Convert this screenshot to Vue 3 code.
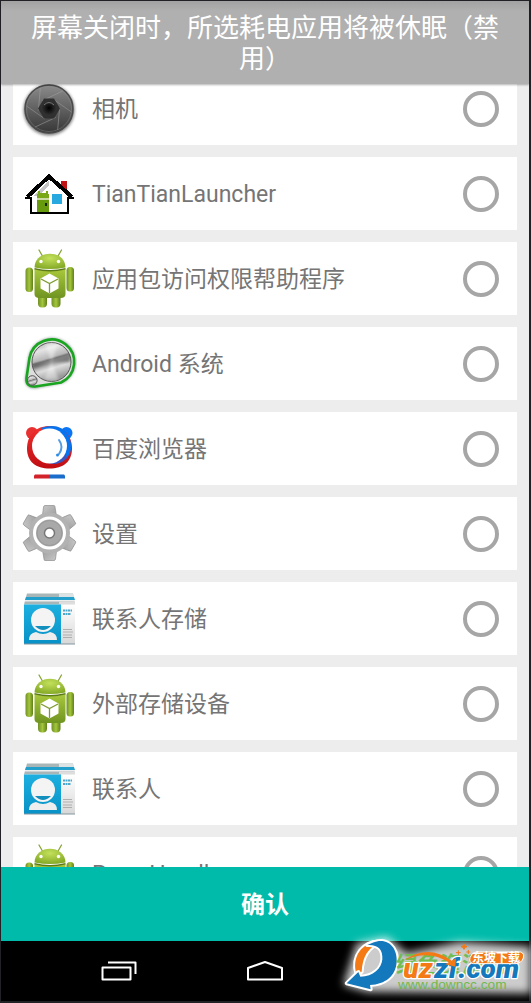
<script setup>
import { ref } from 'vue'

const apps = ref([
  { name: '相机', icon: 'camera', checked: false },
  { name: 'TianTianLauncher', icon: 'house', checked: false },
  { name: '应用包访问权限帮助程序', icon: 'droid', checked: false },
  { name: 'Android 系统', icon: 'system', checked: false },
  { name: '百度浏览器', icon: 'baidu', checked: false },
  { name: '设置', icon: 'gear', checked: false },
  { name: '联系人存储', icon: 'contacts', checked: false },
  { name: '外部存储设备', icon: 'droid', checked: false },
  { name: '联系人', icon: 'contacts', checked: false },
  { name: 'ProxyHandler', icon: 'droid', checked: false }
])
const blades = [0, 60, 120, 180, 240, 300]
</script>

<template>
  <div class="screen">
    <svg class="defs" aria-hidden="true">
      <defs>
        <linearGradient id="lens" x1="0" y1="0" x2="0" y2="1">
          <stop offset="0" stop-color="#8b8b8b" /><stop offset="1" stop-color="#363636" />
        </linearGradient>
        <radialGradient id="glass">
          <stop offset="0" stop-color="#000" /><stop offset="1" stop-color="#333" />
        </radialGradient>
        <linearGradient id="green" x1="0" y1="0" x2="0" y2="1">
          <stop offset="0" stop-color="#a9c83c" /><stop offset="1" stop-color="#6f9420" />
        </linearGradient>
        <radialGradient id="head" cx=".5" cy=".3" r=".7">
          <stop offset="0" stop-color="#c3e05a" /><stop offset="1" stop-color="#85aa27" />
        </radialGradient>
        <linearGradient id="limb">
          <stop offset="0" stop-color="#6f9026" /><stop offset=".5" stop-color="#a4c63c" /><stop offset="1" stop-color="#5f8019" />
        </linearGradient>
        <linearGradient id="steel" x1="0" y1="0" x2="0.3" y2="1">
          <stop offset="0" stop-color="#a0a0a0" /><stop offset=".25" stop-color="#e4e4e4" />
          <stop offset=".48" stop-color="#b8b8b8" /><stop offset=".53" stop-color="#777" />
          <stop offset=".75" stop-color="#ddd" /><stop offset="1" stop-color="#999" />
        </linearGradient>
        <linearGradient id="red" x1="0" y1="0" x2="0" y2="1">
          <stop offset="0" stop-color="#f0302e" /><stop offset="1" stop-color="#c00d12" />
        </linearGradient>
        <linearGradient id="metal" x1="0" y1="0" x2="1" y2="1">
          <stop offset="0" stop-color="#c8c8c8" /><stop offset="1" stop-color="#989898" />
        </linearGradient>
        <linearGradient id="card" x1="0" y1="0" x2="0" y2="1">
          <stop offset="0" stop-color="#1cb0e0" /><stop offset="1" stop-color="#0891c6" />
        </linearGradient>
        <linearGradient id="paper" x1="0" y1="0" x2="0" y2="1">
          <stop offset="0" stop-color="#fff" /><stop offset="1" stop-color="#d8d8d8" />
        </linearGradient>
        <filter id="soft" x="-30%" y="-30%" width="160%" height="160%"><feGaussianBlur stdDeviation="1.5" /></filter>
        <filter id="haze" x="-30%" y="-50%" width="160%" height="200%"><feGaussianBlur stdDeviation="12" /></filter>
      </defs>
    </svg>

    <header class="title">屏幕关闭时，所选耗电应用将被休眠（禁用）</header>

    <main class="content">
      <ul class="list">
        <li v-for="app in apps" :key="app.name">
          <label class="row">
            <svg class="icon" viewBox="0 0 56 65" aria-hidden="true">
              <g v-if="app.icon === 'camera'">
                <circle cx="28" cy="34" r="25.5" fill="#444" opacity=".7" filter="url(#soft)" />
                <circle cx="28" cy="33" r="24" fill="url(#lens)" stroke="#4a4a4a" stroke-width="1.5" />
                <circle cx="28" cy="33" r="22.5" fill="none" stroke="#8d8d8d" stroke-width=".7" opacity=".6" />
                <path v-for="a in blades" :key="a" d="M18 29L31 10.5" :transform="`rotate(${a + 90} 28 33)`" stroke="#a2a2a2" stroke-width=".7" opacity=".7" />
                <path d="M23 22.500h10l6 10-6 10H23l-6-10z" fill="#303030" />
                <circle cx="28" cy="32" r="7.500" fill="url(#glass)" />
                <path d="M23 29q5-5 10 0" fill="none" stroke="#777" stroke-width="1" />
              </g>
              <g v-else-if="app.icon === 'house'" shape-rendering="crispEdges">
                <path d="M40 20h6v9h-6z" fill="#c01414" />
                <path d="M10 36L28 17l19 19v17H10z" fill="#fff" />
                <path d="M12 35L28 19v5L17 35z" fill="#c4c4c4" />
                <path d="M10 36v16h37V36" fill="none" stroke="#000" stroke-width="2" />
                <path d="M6 36L28 15.500 51 36" fill="none" stroke="#000" stroke-width="4" />
                <path d="M4 36h6v2H4zM47 36h6v2h-6z" />
                <path d="M30.500 33H41v9.500H30.500z" fill="#27a9df" />
                <path d="M17 30h2v2h6v-2h2v3h1v4H16v-4h1z" fill="#78a817" />
                <path d="M16 37h12v2H16z" fill="#c9d8a5" />
                <path d="M16 39h12v12H16z" fill="#679a0c" />
                <path d="M24 42h2v3h-2z" fill="#182704" />
              </g>
              <g v-else-if="app.icon === 'droid'">
                <path d="M18 4l4 7M40.500 4l-4 7" stroke="#87a538" stroke-width="1.300" stroke-linecap="round" />
                <rect x="17" y="45" width="9" height="16.500" rx="4" fill="url(#limb)" />
                <rect x="30.500" y="45" width="9" height="16.500" rx="4" fill="url(#limb)" />
                <rect x="4.500" y="21.500" width="7.500" height="24.500" rx="3.500" fill="url(#limb)" />
                <rect x="45.500" y="21" width="7.500" height="24.500" rx="3.500" fill="url(#limb)" />
                <path d="M13.500 23q15.500 4 31 0v25q0 4-5 4h-21q-5 0-5-4z" fill="url(#green)" />
                <path d="M13.500 22q15.500 4 31 0v1.500q-15.500 4-31 0z" fill="#5b7a18" />
                <path d="M13.500 21.500C14 3 44 3 44.500 21.500q-15.500 3-31 0z" fill="url(#head)" />
                <circle cx="20" cy="15.500" r="1.700" fill="#fff" /><circle cx="37.500" cy="15.500" r="1.700" fill="#fff" />
                <path d="M28.500 27.500l9 5v10l-9 5-9-5v-10z" fill="#fff" />
                <path d="M20 33l8.500 4.500L37 33M28.500 37.500V47" fill="none" stroke="#7d9b31" stroke-width="1.300" />
              </g>
              <g v-else-if="app.icon === 'system'">
                <path d="M7.500 28A23.500 23.500 0 1 1 42 51.500L14 57Q4 57 4.500 48z" fill="#243" opacity=".7" filter="url(#soft)" />
                <path d="M8.500 27A22.500 22.500 0 1 1 40 51.500L14 55.500Q4.500 56 5.500 47z" fill="#dedede" stroke="#19a51f" stroke-width="2.600" />
                <circle cx="30.500" cy="31" r="19.500" fill="url(#steel)" stroke="#555" stroke-width="1" />
                <path d="M30.500 31L24 13q7-2 13 0zM30.500 31l-7 17q8 3 14 0z" fill="#fff" opacity=".4" filter="url(#soft)" />
                <path d="M30.500 31L49 25v6zM30.500 31L12 38v-5z" fill="#444" opacity=".5" filter="url(#soft)" />
                <circle cx="11.300" cy="49.500" r="4.800" fill="url(#steel)" stroke="#555" />
              </g>
              <g v-else-if="app.icon === 'baidu'">
                <circle cx="11" cy="17" r="6" fill="#e93030" /><circle cx="45.500" cy="17" r="6" fill="#0a76f5" />
                <path d="M28.500 10C15 10 6 19 6 32.500S15 52.500 28.500 52.500 51 46 51 32.500 42 10 28.500 10z" fill="url(#red)" />
                <path d="M20 12Q39 6 47 19q7 13-1 23-8 8-19 5l14-15z" fill="#0873ee" />
                <path d="M46 42q-8 8-19 5l8-2 9-8z" fill="#5841a5" opacity=".6" />
                <circle cx="28.500" cy="30" r="17.500" fill="#fff" />
                <path d="M38 24q5 7 0 14" fill="none" stroke="#539ce3" stroke-width="2" stroke-linecap="round" />
                <circle cx="36.500" cy="39" r="1.500" fill="#2a8ae6" />
                <path d="M14 58.500h15v4H13v-3z" fill="#d2232a" /><path d="M29 58.500h14l1 1v3H29z" fill="#1b6dcc" />
              </g>
              <g v-else-if="app.icon === 'gear'">
                <g fill="url(#metal)" stroke="#8e8e8e" stroke-width=".7">
                  <path v-for="a in blades" :key="a" d="M21 18L22.500 6q.3-1.500 1.500-1.500h9Q34 4.500 34 6l2 12z" :transform="`rotate(${a} 28.500 32)`" />
                </g>
                <circle cx="28.500" cy="32" r="20.500" fill="#b2b2b2" />
                <circle cx="28.500" cy="32" r="15" fill="#a9a9a9" stroke="#fff" stroke-width="3" />
                <circle cx="28.500" cy="32" r="12.500" fill="none" stroke="#929292" stroke-width=".7" />
                <circle cx="28.500" cy="32" r="5" fill="#fff" stroke="#777" stroke-width="1.500" />
              </g>
              <g v-else>
                <path d="M6 7.500h46l2 11H3z" fill="#a9b6b8" />
                <path d="M38 7.500h14l1 4H38z" fill="#dce3e4" />
                <path d="M5 11h48l1 3H4z" fill="#239fcb" /><path d="M4 14h50v1.500H4z" fill="#eee" />
                <path d="M38 15.500h16v3H38z" fill="#ddd" />
                <path d="M3 18.500h37V58H3z" fill="url(#card)" /><path d="M40 18.500h14V58H40z" fill="url(#paper)" />
                <path d="M3 57.500h51v1H3z" fill="#8296a0" />
                <circle cx="22" cy="34" r="12" fill="#f4f4f4" />
                <path d="M14 40h16q-8 8-16 0z" fill="#138fbd" />
                <path d="M8 54q0-7 7-8 7 4 14 0 7 1 7 8z" fill="#eee" />
                <path d="M42 24.500h9M42 28h8" stroke="#4baacb" stroke-width="1.800" stroke-dasharray="2 .5" />
                <path d="M42 43.500h9M42 46h10M42 49h9M42 51.500h9" stroke="#a2a2a2" stroke-width=".8" />
              </g>
            </svg>
            <span class="name">{{ app.name }}</span>
            <input v-model="app.checked" class="tick" type="checkbox" />
          </label>
        </li>
      </ul>
    </main>

    <button class="confirm" type="button">确认</button>

    <nav class="navbar">
      <button type="button" aria-label="最近任务">
        <svg width="36" height="20" viewBox="0 0 36 20"><path d="M1.500 6.500h28v12h-28zM7 1.500h27.500V13" /></svg>
      </button>
      <button type="button" aria-label="主屏幕">
        <svg width="36" height="20" viewBox="0 0 36 20"><path d="M1 18.500V7L18 1l17 6v11.500z" /></svg>
      </button>
      <span class="spare"></span>
    </nav>

    <svg class="watermark" viewBox="0 0 603 219">
      <g filter="url(#haze)" fill="#fff">
        <path d="M40 165L80 40 170 20 230 70 390 35 603 50V190L110 185z" opacity=".8" />
      </g>
      <g stroke="#fff" stroke-width="12" stroke-linejoin="round" paint-order="stroke">
        <path d="M80 133C62 80 100 30 155 36Q98 55 95 125z" fill="#f47a16" />
        <path d="M128 38C175 20 203 55 200 96 197 138 166 163 120 165L122 178 50 160 85 126 91 140C130 140 155 115 157 88 159 57 143 43 112 45z" fill="#1478bd" />
      </g>
      <text class="wm-source" x="198" y="127">绿色资源网</text>
      <g class="wm-word">
        <text x="220" y="143" fill="#f47a16">uz</text>
        <text x="313" y="143" fill="#1478bd">zf.com</text>
      </g>
      <path d="M222 91Q295 40 365 92L378 85 376 110 346 103 356 97Q295 57 222 91z" fill="#f47a16" />
      <path d="M402 42l3 6 6 2-6 2-3 6-3-6-6-2 6-2zM385 61v14m-7-7h14M415 60v12m-6-6h12" fill="#f47a16" stroke="#f47a16" stroke-width="3" />
      <path d="M438 66H572Q584 70 580 84 575 99 558 101H430Q416 98 420 83 424 69 438 66z" fill="#f47a16" stroke="#fff" stroke-width="3" />
      <text class="wm-badge" x="426" y="96">东坡下载</text>
      <text class="wm-url" x="204" y="176">www.downcc.com</text>
    </svg>
  </div>
</template>

<style>
body { background: #222226; }
</style>

<style scoped>
.screen {
  position: relative;
  box-sizing: border-box;
  display: flex;
  flex-direction: column;
  height: 100vh;
  overflow: hidden;
  padding: 1px 2px 2px 1px;
  background: #222226;
  font-family: Roboto, "Noto Sans CJK SC", sans-serif;
}
.defs { position: absolute; width: 0; height: 0; }
.title {
  position: relative;
  z-index: 1;
  padding: 12px 24px 9px;
  background: linear-gradient(#a2a2a2, #b0b0b0 10px);
  box-shadow: 0 1px 2px rgba(0, 0, 0, 0.3);
  color: #fff;
  font-size: 26px;
  line-height: 31px;
  text-align: center;
}
.content {
  flex: 1;
  min-height: 0;
  overflow: hidden;
  background: #ededed;
}
.list {
  display: flex;
  flex-direction: column;
  gap: 12px;
  margin: -12px 12px 0;
  padding: 0;
  list-style: none;
}
.row {
  display: flex;
  align-items: center;
  padding: 4px 18px 4px 8px;
  background: #fff;
}
.icon { flex: none; width: 56px; height: 65px; }
.name {
  flex: 1;
  margin-left: 15px;
  padding-top: 2px;
  color: #757575;
  font-size: 23px;
  line-height: 30px;
}
.tick {
  appearance: none;
  box-sizing: border-box;
  width: 36px;
  height: 36px;
  margin: 0;
  border: 4px solid #a6a6a6;
  border-radius: 50%;
}
.tick:checked { background: #00bbaa; }
.confirm {
  flex: none;
  padding: 21px 20px 19px;
  border: 0;
  background: #00bbaa;
  color: #fff;
  font: bold 24px/34px Roboto, "Noto Sans CJK SC", sans-serif;
}
.navbar {
  display: flex;
  flex: none;
  justify-content: center;
  height: 60px;
  background: #000;
}
.navbar button,
.spare {
  width: 146px;
  padding: 0;
  border: 0;
  background: none;
}
.navbar svg {
  display: block;
  margin: 0 auto;
  fill: none;
  stroke: #fff;
  stroke-width: 2;
  stroke-linejoin: round;
}
.watermark {
  position: absolute;
  right: 0;
  bottom: 0;
  width: 201px;
  height: 73px;
  pointer-events: none;
}
.wm-source {
  fill: #72bd52;
  font: bold 66px "Noto Sans CJK SC", sans-serif;
}
.wm-word {
  font: italic 900 84px Roboto, sans-serif;
  stroke: #fff;
  stroke-width: 8px;
  stroke-linejoin: round;
  paint-order: stroke;
}
.wm-badge {
  fill: #fff;
  font: bold 36px "Noto Sans CJK SC", sans-serif;
}
.wm-url {
  fill: #6fb94c;
  font: 41px "Liberation Sans", sans-serif;
}
</style>
